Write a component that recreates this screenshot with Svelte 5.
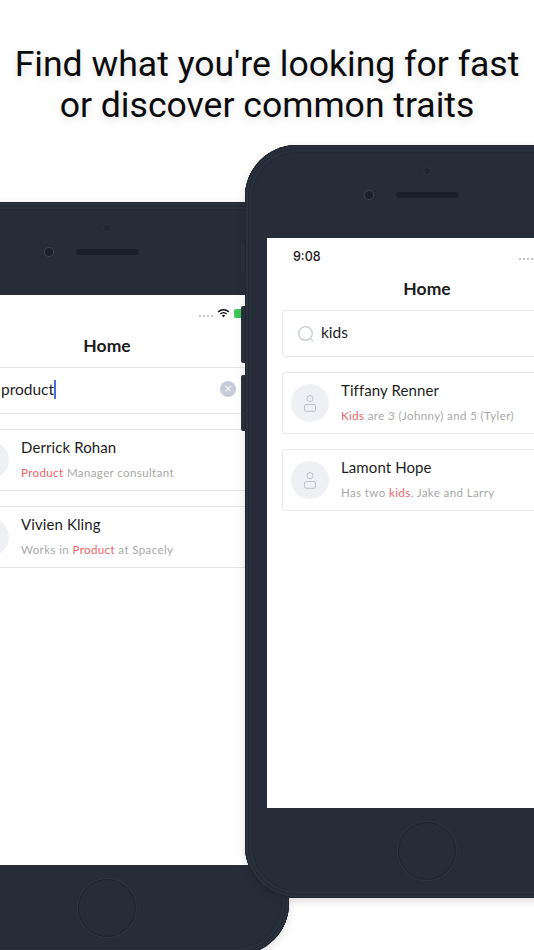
<script>
  // Search results shown on each phone; parts flagged hit are highlighted
  const productResults = [
    { name: 'Derrick Rohan', note: [{ text: 'Product', hit: true }, { text: ' Manager consultant' }] },
    { name: 'Vivien Kling', note: [{ text: 'Works in ' }, { text: 'Product', hit: true }, { text: ' at Spacely' }] }
  ];
  const kidsResults = [
    { name: 'Tiffany Renner', note: [{ text: 'Kids', hit: true }, { text: ' are 3 (Johnny) and 5 (Tyler)' }] },
    { name: 'Lamont Hope', note: [{ text: 'Has two ' }, { text: 'kids', hit: true }, { text: ', Jake and Larry' }] }
  ];
</script>

{#snippet phone(side, query, results, focused)}
  <div class="phone {side}">
    <div class="bezel-top">
      <span class="sensor"></span>
      <span class="camera"></span>
      <span class="speaker"></span>
    </div>
    <div class="screen">
      <div class="status">
        <!-- the back phone's clock sits past the page edge -->
        <span class="time">{focused ? '' : '9:08'}</span>
        <div class="status-icons">
          <span class="signal"></span>
          <svg width="13" height="10" viewBox="0 0 13 10" aria-hidden="true">
            <path d="M0.6 3.4a8.4 8.4 0 0 1 11.8 0l-1.1 1.1a6.8 6.8 0 0 0-9.6 0z" fill="#111" />
            <path d="M2.8 5.5a5.3 5.3 0 0 1 7.4 0l-1.1 1.1a3.7 3.7 0 0 0-5.2 0z" fill="#111" />
            <path d="M4.9 7.6a2.3 2.3 0 0 1 3.2 0L6.5 9.4z" fill="#111" />
          </svg>
          <span class="battery"></span>
        </div>
      </div>
      <div class="title">Home</div>
      <div class="search">
        <svg width="18" height="18" viewBox="0 0 18 18" fill="none" stroke="#c3ccd3" stroke-width="1.3" aria-hidden="true">
          <circle cx="8.5" cy="8.5" r="6.8" />
          <path d="M13.4 13.4l2.6 2.6" />
        </svg>
        <span class="query">{query}{#if focused}<span class="caret"></span>{/if}</span>
        {#if focused}
          <span class="clear">×</span>
        {/if}
      </div>
      {#each results as person}
        <div class="card">
          <div class="avatar">
            <svg width="12" height="17" viewBox="0 0 12 17" fill="none" stroke="#b4bcc4" stroke-width="0.9" aria-hidden="true">
              <circle cx="6" cy="3.6" r="3.1" />
              <rect x="0.5" y="9.5" width="11" height="6.8" rx="1.5" />
            </svg>
          </div>
          <div class="info">
            <div class="name">{person.name}</div>
            <div class="note">
              {#each person.note as part}{#if part.hit}<em>{part.text}</em>{:else}{part.text}{/if}{/each}
            </div>
          </div>
        </div>
      {/each}
    </div>
    <div class="bezel-bottom">
      <span class="home-button"></span>
    </div>
  </div>
{/snippet}

<main class="page">
  <h1>Find what you're looking for fast<br />or discover common traits</h1>
  {@render phone('back', 'product', productResults, true)}
  <div class="side-button vol-a"></div>
  <div class="side-button vol-b"></div>
  <div class="side-button vol-c"></div>
  {@render phone('front', 'kids', kidsResults, false)}
</main>

<style>
  :global(body) {
    margin: 0;
    background: #fff;
  }

  .page {
    position: relative;
    width: 534px;
    height: 950px;
    overflow: hidden;
    background: #fff;
  }

  h1 {
    margin: 0;
    padding-top: 44px;
    font-family: Roboto, sans-serif;
    font-weight: 400;
    font-size: 35.6px;
    line-height: 41px;
    text-align: center;
    color: #0b0b0b;
    text-shadow: 0 3px 8px rgba(0, 0, 0, 0.14);
    white-space: nowrap;
  }

  .phone {
    position: absolute;
    width: 364px;
    height: 753px;
    display: flex;
    flex-direction: column;
    align-items: center;
    border-radius: 52px;
    background: #262d38;
    box-shadow:
      inset 0 0 0 1px #1f2531,
      inset 0 0 0 3px #2b323e,
      inset 0 0 0 4px #212834,
      inset 0 0 0 7px #29303c,
      inset 0 0 0 8px #232a35,
      0 3px 10px rgba(0, 0, 0, 0.14);
  }

  .phone.back {
    left: -75px;
    top: 202px;
  }

  .phone.front {
    left: 245px;
    top: 145px;
  }

  .bezel-top {
    position: relative;
    flex: none;
    width: 100%;
    height: 93px;
  }

  .sensor {
    position: absolute;
    left: 178px;
    top: 22px;
    width: 8px;
    height: 8px;
    border-radius: 50%;
    background: #1f2631;
    box-shadow: inset 0 0 0 1px #2c3441;
  }

  .camera {
    position: absolute;
    left: 120px;
    top: 46px;
    width: 8px;
    height: 8px;
    border-radius: 50%;
    background: #1a1f29;
    box-shadow: 0 0 0 1px #3a4250;
  }

  .speaker {
    position: absolute;
    left: 151px;
    top: 47px;
    width: 63px;
    height: 6px;
    border-radius: 3px;
    background: #1a202b;
  }

  .screen {
    flex: none;
    box-sizing: border-box;
    width: 320px;
    height: 570px;
    padding: 0 15px;
    background: #fff;
    overflow: hidden;
  }

  .status {
    display: flex;
    justify-content: space-between;
    align-items: center;
    height: 36px;
    margin-right: -6px;
    padding-left: 11px;
  }

  .time {
    font-family: Inter, sans-serif;
    font-size: 12.5px;
    font-weight: 500;
    color: #1a1a1a;
  }

  .status-icons {
    display: flex;
    align-items: center;
    gap: 4px;
  }

  .signal {
    width: 14px;
    height: 2px;
    margin-top: 5px;
    background: repeating-linear-gradient(90deg, #c4c4c4 0 2px, transparent 2px 4px);
  }

  .battery {
    width: 24px;
    height: 9px;
    border-radius: 2px;
    background: linear-gradient(90deg, #3cc65a 70%, #d9d9d9 70%);
  }

  .title {
    height: 36px;
    font-family: Lato, sans-serif;
    font-size: 17.5px;
    font-weight: 700;
    line-height: 29px;
    text-align: center;
    color: #1b1b1b;
  }

  .search {
    display: flex;
    align-items: center;
    gap: 6px;
    box-sizing: border-box;
    height: 47px;
    margin-bottom: 15px;
    padding: 0 14px;
    border: 1px solid #e4e7ea;
    border-radius: 4px;
  }

  .search svg {
    flex: none;
  }

  .query {
    flex: 1;
    display: flex;
    align-items: center;
    padding-bottom: 3px;
    font-family: Lato, sans-serif;
    font-size: 15.5px;
    color: #1d1d1d;
  }

  .caret {
    width: 1.5px;
    height: 19px;
    background: #4a6fd8;
  }

  .clear {
    flex: none;
    width: 16px;
    height: 16px;
    margin-right: 1px;
    margin-bottom: 3px;
    border-radius: 50%;
    background: #c5ccd8;
    color: #fff;
    font-family: 'Liberation Sans', sans-serif;
    font-size: 13px;
    line-height: 16px;
    text-align: center;
  }

  .card {
    display: flex;
    align-items: center;
    gap: 12px;
    box-sizing: border-box;
    height: 62px;
    margin-bottom: 15px;
    padding: 0 8px;
    border: 1px solid #e4e7ea;
    border-radius: 4px;
  }

  .avatar {
    flex: none;
    display: flex;
    align-items: center;
    justify-content: center;
    width: 38px;
    height: 38px;
    border-radius: 50%;
    background: #eef0f3;
  }

  .info {
    min-width: 0;
    padding-bottom: 3px;
    white-space: nowrap;
  }

  .name {
    font-family: Lato, sans-serif;
    font-size: 15px;
    line-height: 20px;
    letter-spacing: 0.1px;
    color: #1d1d1d;
  }

  .note {
    margin-top: 8px;
    font-family: Lato, sans-serif;
    font-size: 11.5px;
    line-height: 15px;
    letter-spacing: 0.4px;
    color: #a8a8a8;
  }

  .note em {
    font-style: normal;
    color: #ef5f68;
  }

  .bezel-bottom {
    flex: 1;
    display: flex;
    align-items: flex-start;
    justify-content: center;
    padding-top: 14px;
  }

  .home-button {
    box-sizing: border-box;
    width: 58px;
    height: 58px;
    border-radius: 50%;
    border: 1px solid #1d2330;
    box-shadow: 0 0 0 1px #2f3744;
  }

  .side-button {
    position: absolute;
    left: 241px;
    width: 5px;
    border-radius: 2px 0 0 2px;
    background: #2a323f;
  }

  .vol-a {
    top: 243px;
    height: 29px;
  }

  .vol-b {
    top: 306px;
    height: 57px;
  }

  .vol-c {
    top: 375px;
    height: 56px;
  }
</style>
